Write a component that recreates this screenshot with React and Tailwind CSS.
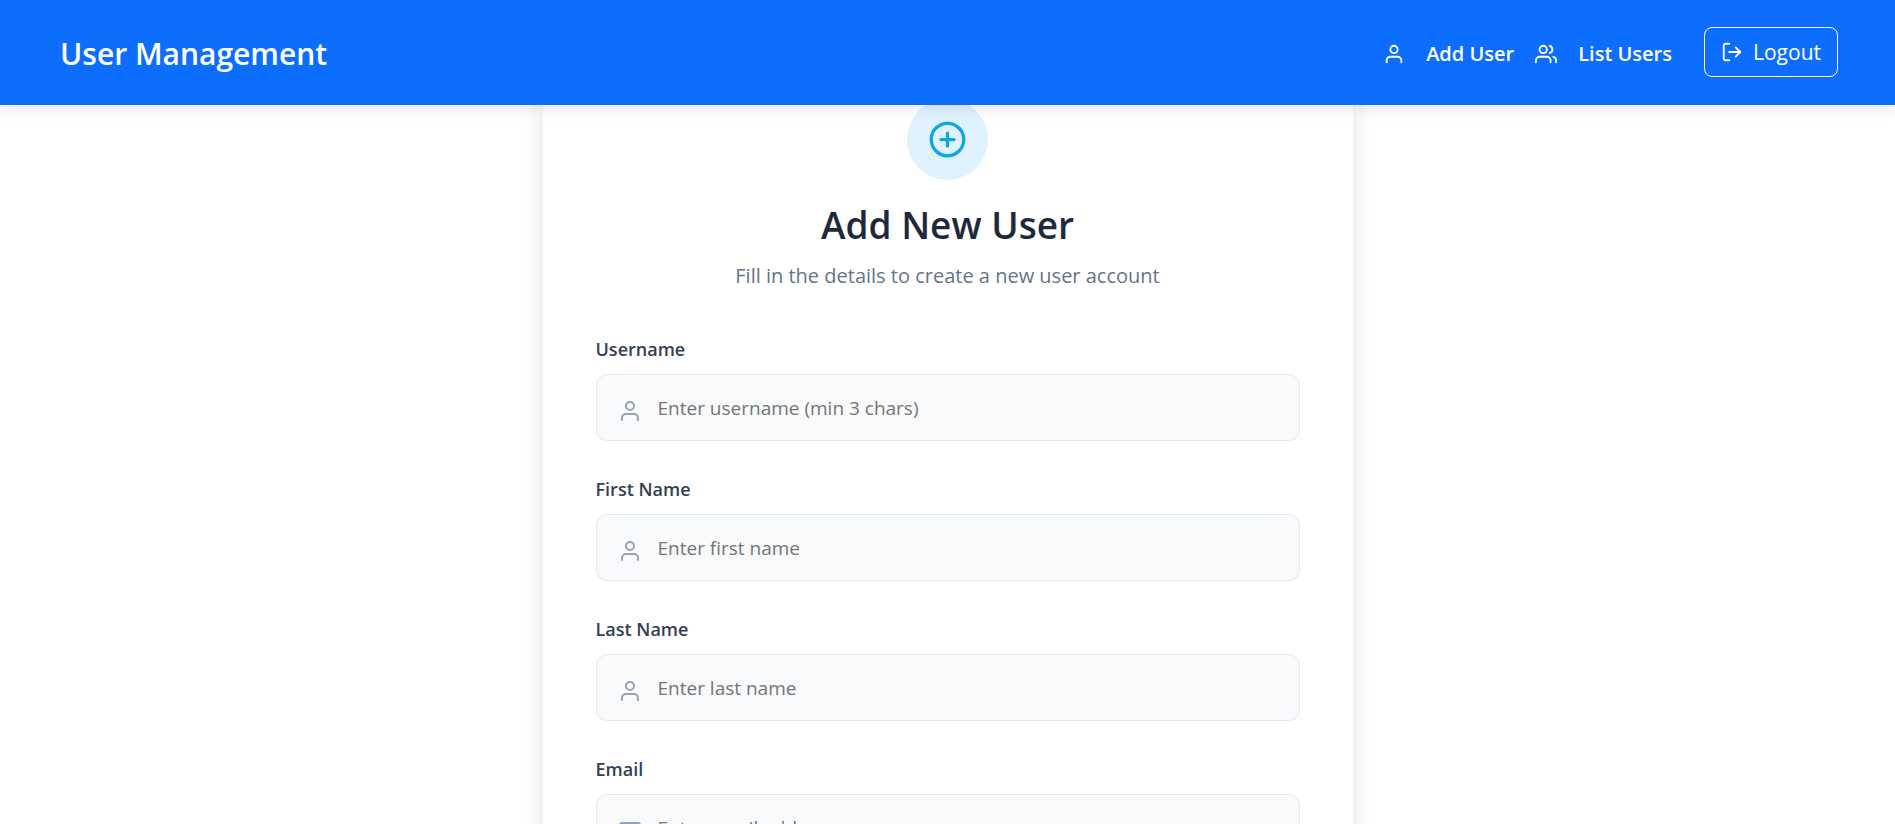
import { FiUser, FiUsers, FiLogOut, FiPlusCircle, FiMail } from "react-icons/fi";

const fields = [
  { id: "username", label: "Username", placeholder: "Enter username (min 3 chars)", type: "text", Icon: FiUser },
  { id: "firstName", label: "First Name", placeholder: "Enter first name", type: "text", Icon: FiUser },
  { id: "lastName", label: "Last Name", placeholder: "Enter last name", type: "text", Icon: FiUser },
  { id: "email", label: "Email", placeholder: "Enter email address", type: "email", Icon: FiMail },
];

function Header() {
  return (
    <header className="relative z-10 flex h-[105px] items-center justify-between bg-[#0d6efd] pt-0.5 pr-[57px] pl-[60px] text-white shadow-[0_3px_14px_rgba(0,0,0,0.1)]">
      <a href="#home" className="text-[30px] leading-9 font-semibold">User Management</a>
      <div className="flex items-center gap-8">
        <nav className="flex items-center gap-[21px]">
          <a href="#add" className="flex items-center gap-[21px] text-[20px] leading-8 font-semibold">
            <FiUser size={22} />
            Add User
          </a>
          <a href="#list" className="flex items-center gap-[21px] text-[20px] leading-8 font-semibold">
            <FiUsers size={22} />
            List Users
          </a>
        </nav>
        <button type="button" className="mb-1 flex h-[50px] items-center gap-2.5 rounded-lg border border-white px-4 text-[21px] leading-8">
          <FiLogOut size={22} />
          Logout
        </button>
      </div>
    </header>
  );
}

function Field({ id, label, placeholder, type, Icon }) {
  return (
    <div>
      <label htmlFor={id} className="mb-3 block text-[18px] leading-[26px] font-semibold text-[#334155]">
        {label}
      </label>
      <div className="relative">
        <Icon size={24} className="absolute top-[25px] left-[22px] text-[#94a3b8]" />
        <input
          id={id}
          name={id}
          type={type}
          placeholder={placeholder}
          className="block h-[67px] w-full rounded-[11px] border border-[#e2e8f0] bg-[#f8fafc] pr-5 pl-[61px] text-[19px] text-[#1e293b] placeholder:text-[#757575]"
        />
      </div>
    </div>
  );
}

export default function App() {
  return (
    <div className="h-screen overflow-hidden bg-white font-['Open_Sans','Noto_Sans',sans-serif]">
      <Header />
      <main className="-mt-[60px]">
        <section className="mx-auto w-full max-w-[810px] rounded-2xl bg-white px-[53px] py-[54px] shadow-[0_5px_27px_rgba(0,0,0,0.1)]">
          <div className="flex flex-col items-center text-center">
            <div className="flex size-[81px] items-center justify-center rounded-full bg-[#e0f2fe] text-[#0ea5e9]">
              <FiPlusCircle size={39} />
            </div>
            <h1 className="mt-[21px] text-[37px] leading-[48px] font-semibold text-[#1e293b]">Add New User</h1>
            <p className="mt-[11px] text-[20px] leading-8 text-[#64748b]">Fill in the details to create a new user account</p>
          </div>
          <form className="mt-11 flex flex-col gap-[35px]">
            {fields.map((field) => (
              <Field key={field.id} {...field} />
            ))}
          </form>
        </section>
      </main>
    </div>
  );
}
